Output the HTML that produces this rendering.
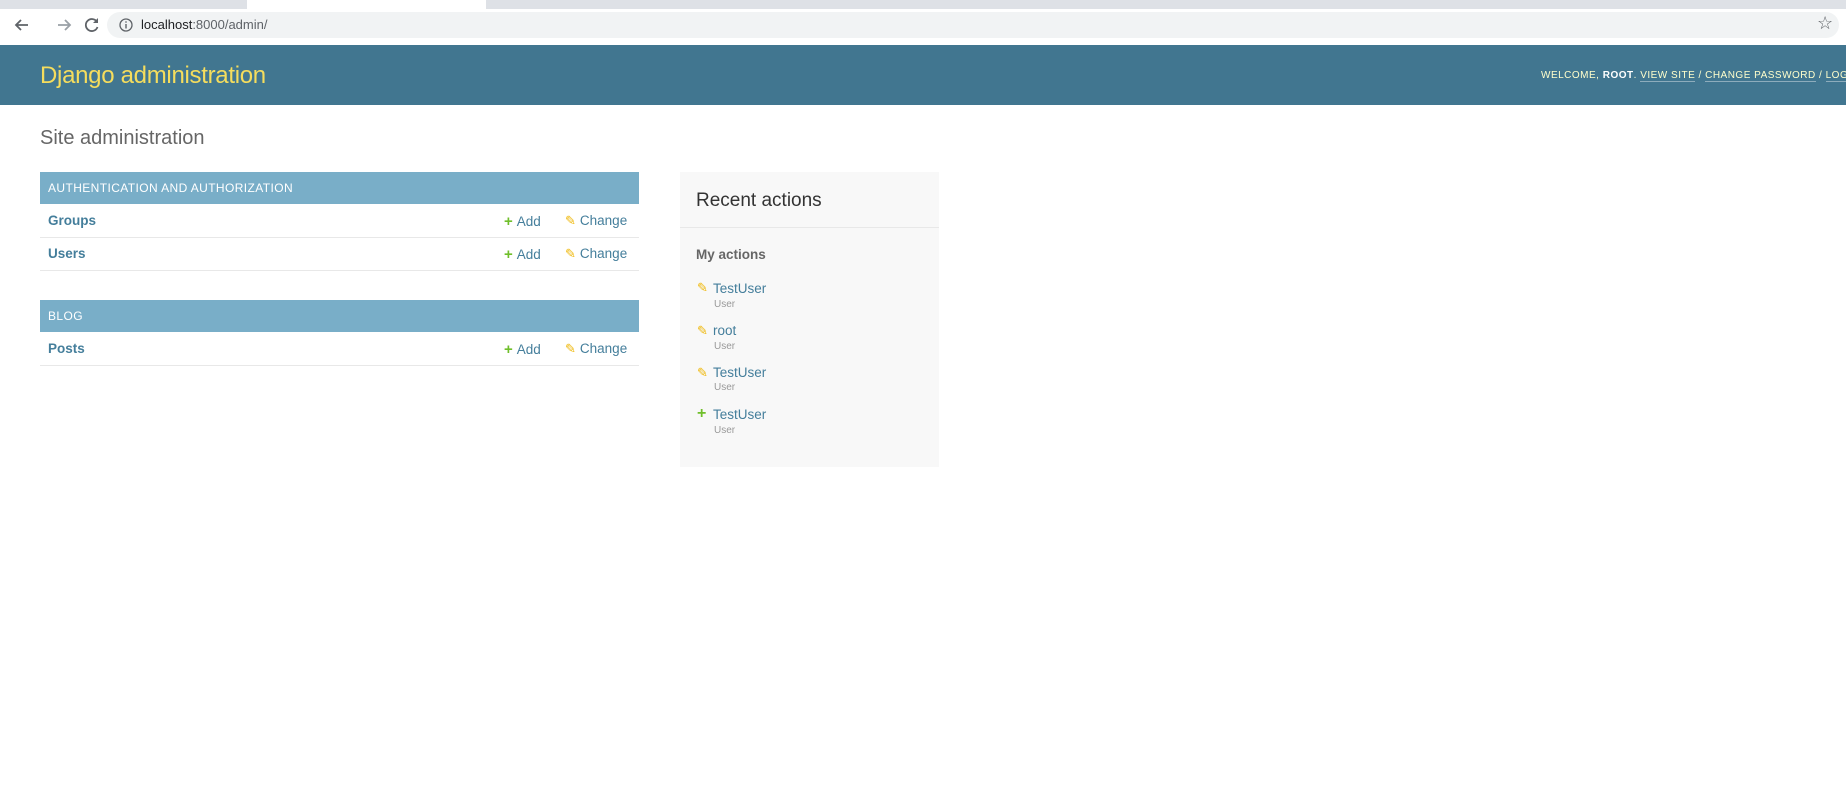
<!DOCTYPE html>
<html><head><meta charset="utf-8"><style>
*{margin:0;padding:0;box-sizing:border-box}
body{width:1846px;height:790px;background:#fff;font-family:"Liberation Sans",sans-serif;position:relative;overflow:hidden}
.a{position:absolute;white-space:nowrap}
.row{position:absolute;left:40px;width:599px;border-bottom:1px solid #e8e8e8}
.cap{position:absolute;left:40px;width:599px;background:#79aec8;color:#fff;font-size:12px;letter-spacing:.4px;padding-left:8px}
.nm{position:absolute;left:8px;font-weight:bold;font-size:13.5px;color:#447e9b}
.add{position:absolute;left:464px;font-size:13.5px;color:#447e9b}
.chg{position:absolute;left:525px;font-size:13.5px;color:#447e9b}
.plus{color:#70bf2b;font-weight:bold;font-size:15px;margin-right:4px}
.pen{color:#efb80b;margin-right:4px;font-size:13px}
.it{position:absolute;left:713px;font-size:13.5px;color:#447e9b}
.us{position:absolute;left:714px;font-size:10px;color:#999}
.ic{position:absolute;left:697px;font-size:13px}
</style></head><body>
<div class="a" style="left:0;top:0;width:1846px;height:9px;background:#dee1e6"></div>
<div class="a" style="left:247px;top:0;width:239px;height:9px;background:#fff"></div>
<div class="a" style="left:0;top:9px;width:1846px;height:36px;background:#fff"></div>
<div class="a" style="left:107px;top:12px;width:1732px;height:26px;background:#f1f3f4;border-radius:13px"></div>
<svg class="a" style="left:12px;top:15px" width="90" height="20" viewBox="0 0 90 20">
<path d="M16 10H4M9 5L4 10l5 5" stroke="#5f6368" stroke-width="1.8" fill="none"/>
<path d="M46 10h12M53 5l5 5-5 5" stroke="#9aa0a6" stroke-width="1.8" fill="none"/>
<path d="M85 7a6 6 0 1 0 .5 5" stroke="#5f6368" stroke-width="1.8" fill="none"/><path d="M86 3v5h-5z" fill="#5f6368"/>
</svg>
<svg class="a" style="left:119px;top:18px" width="14" height="14"><circle cx="7" cy="7" r="6" stroke="#5f6368" stroke-width="1.3" fill="none"/><rect x="6.3" y="6" width="1.4" height="4.5" fill="#5f6368"/><rect x="6.3" y="3.3" width="1.4" height="1.4" fill="#5f6368"/></svg>
<div class="a" style="left:141px;top:17px;font-size:13px;color:#202124">localhost<span style="color:#5f6368">:8000/admin/</span></div>
<div class="a" style="left:1817px;top:13px;font-size:18px;color:#5f6368">☆</div>
<div class="a" style="left:0;top:45px;width:1846px;height:60px;background:#417690"></div>
<div class="a" style="left:40px;top:62px;font-size:24px;letter-spacing:-.3px;color:#f5dd5d">Django administration</div>
<div class="a" style="left:1541px;top:70px;font-size:10px;letter-spacing:.5px;color:#ffc">WELCOME, <b style="color:#fff">ROOT</b>. <span style="border-bottom:1px solid rgba(255,255,255,.4)">VIEW SITE</span> / <span style="border-bottom:1px solid rgba(255,255,255,.4)">CHANGE PASSWORD</span> / <span style="border-bottom:1px solid rgba(255,255,255,.4)">LOG OUT</span></div>
<div class="a" style="left:40px;top:127px;font-size:20px;color:#666">Site administration</div>
<div class="cap" style="top:172px;height:32px;line-height:32px">AUTHENTICATION AND AUTHORIZATION</div>
<div class="row" style="top:204px;height:34px"><span class="nm" style="top:9px">Groups</span><span class="add" style="top:9px"><span class="plus">+</span>Add</span><span class="chg" style="top:9px"><span class="pen">✎</span>Change</span></div>
<div class="row" style="top:238px;height:33px"><span class="nm" style="top:8px">Users</span><span class="add" style="top:8px"><span class="plus">+</span>Add</span><span class="chg" style="top:8px"><span class="pen">✎</span>Change</span></div>
<div class="cap" style="top:300px;height:32px;line-height:32px">BLOG</div>
<div class="row" style="top:332px;height:34px"><span class="nm" style="top:9px">Posts</span><span class="add" style="top:9px"><span class="plus">+</span>Add</span><span class="chg" style="top:9px"><span class="pen">✎</span>Change</span></div>
<div class="a" style="left:680px;top:172px;width:259px;height:295px;background:#f8f8f8"></div>
<div class="a" style="left:680px;top:227px;width:259px;height:1px;background:#e8e8e8"></div>
<div class="a" style="left:696px;top:190px;font-size:19px;color:#333">Recent actions</div>
<div class="a" style="left:696px;top:247px;font-size:13.5px;font-weight:bold;color:#666">My actions</div>
<span class="a ic" style="top:280px;color:#efb80b">✎</span><span class="a it" style="top:281px">TestUser</span><span class="a us" style="top:299px">User</span>
<span class="a ic" style="top:323px;color:#efb80b">✎</span><span class="a it" style="top:323px">root</span><span class="a us" style="top:341px">User</span>
<span class="a ic" style="top:365px;color:#efb80b">✎</span><span class="a it" style="top:365px">TestUser</span><span class="a us" style="top:382px">User</span>
<span class="a ic" style="top:405px;color:#70bf2b;font-weight:bold;font-size:16px">+</span><span class="a it" style="top:407px">TestUser</span><span class="a us" style="top:425px">User</span>
</body></html>
